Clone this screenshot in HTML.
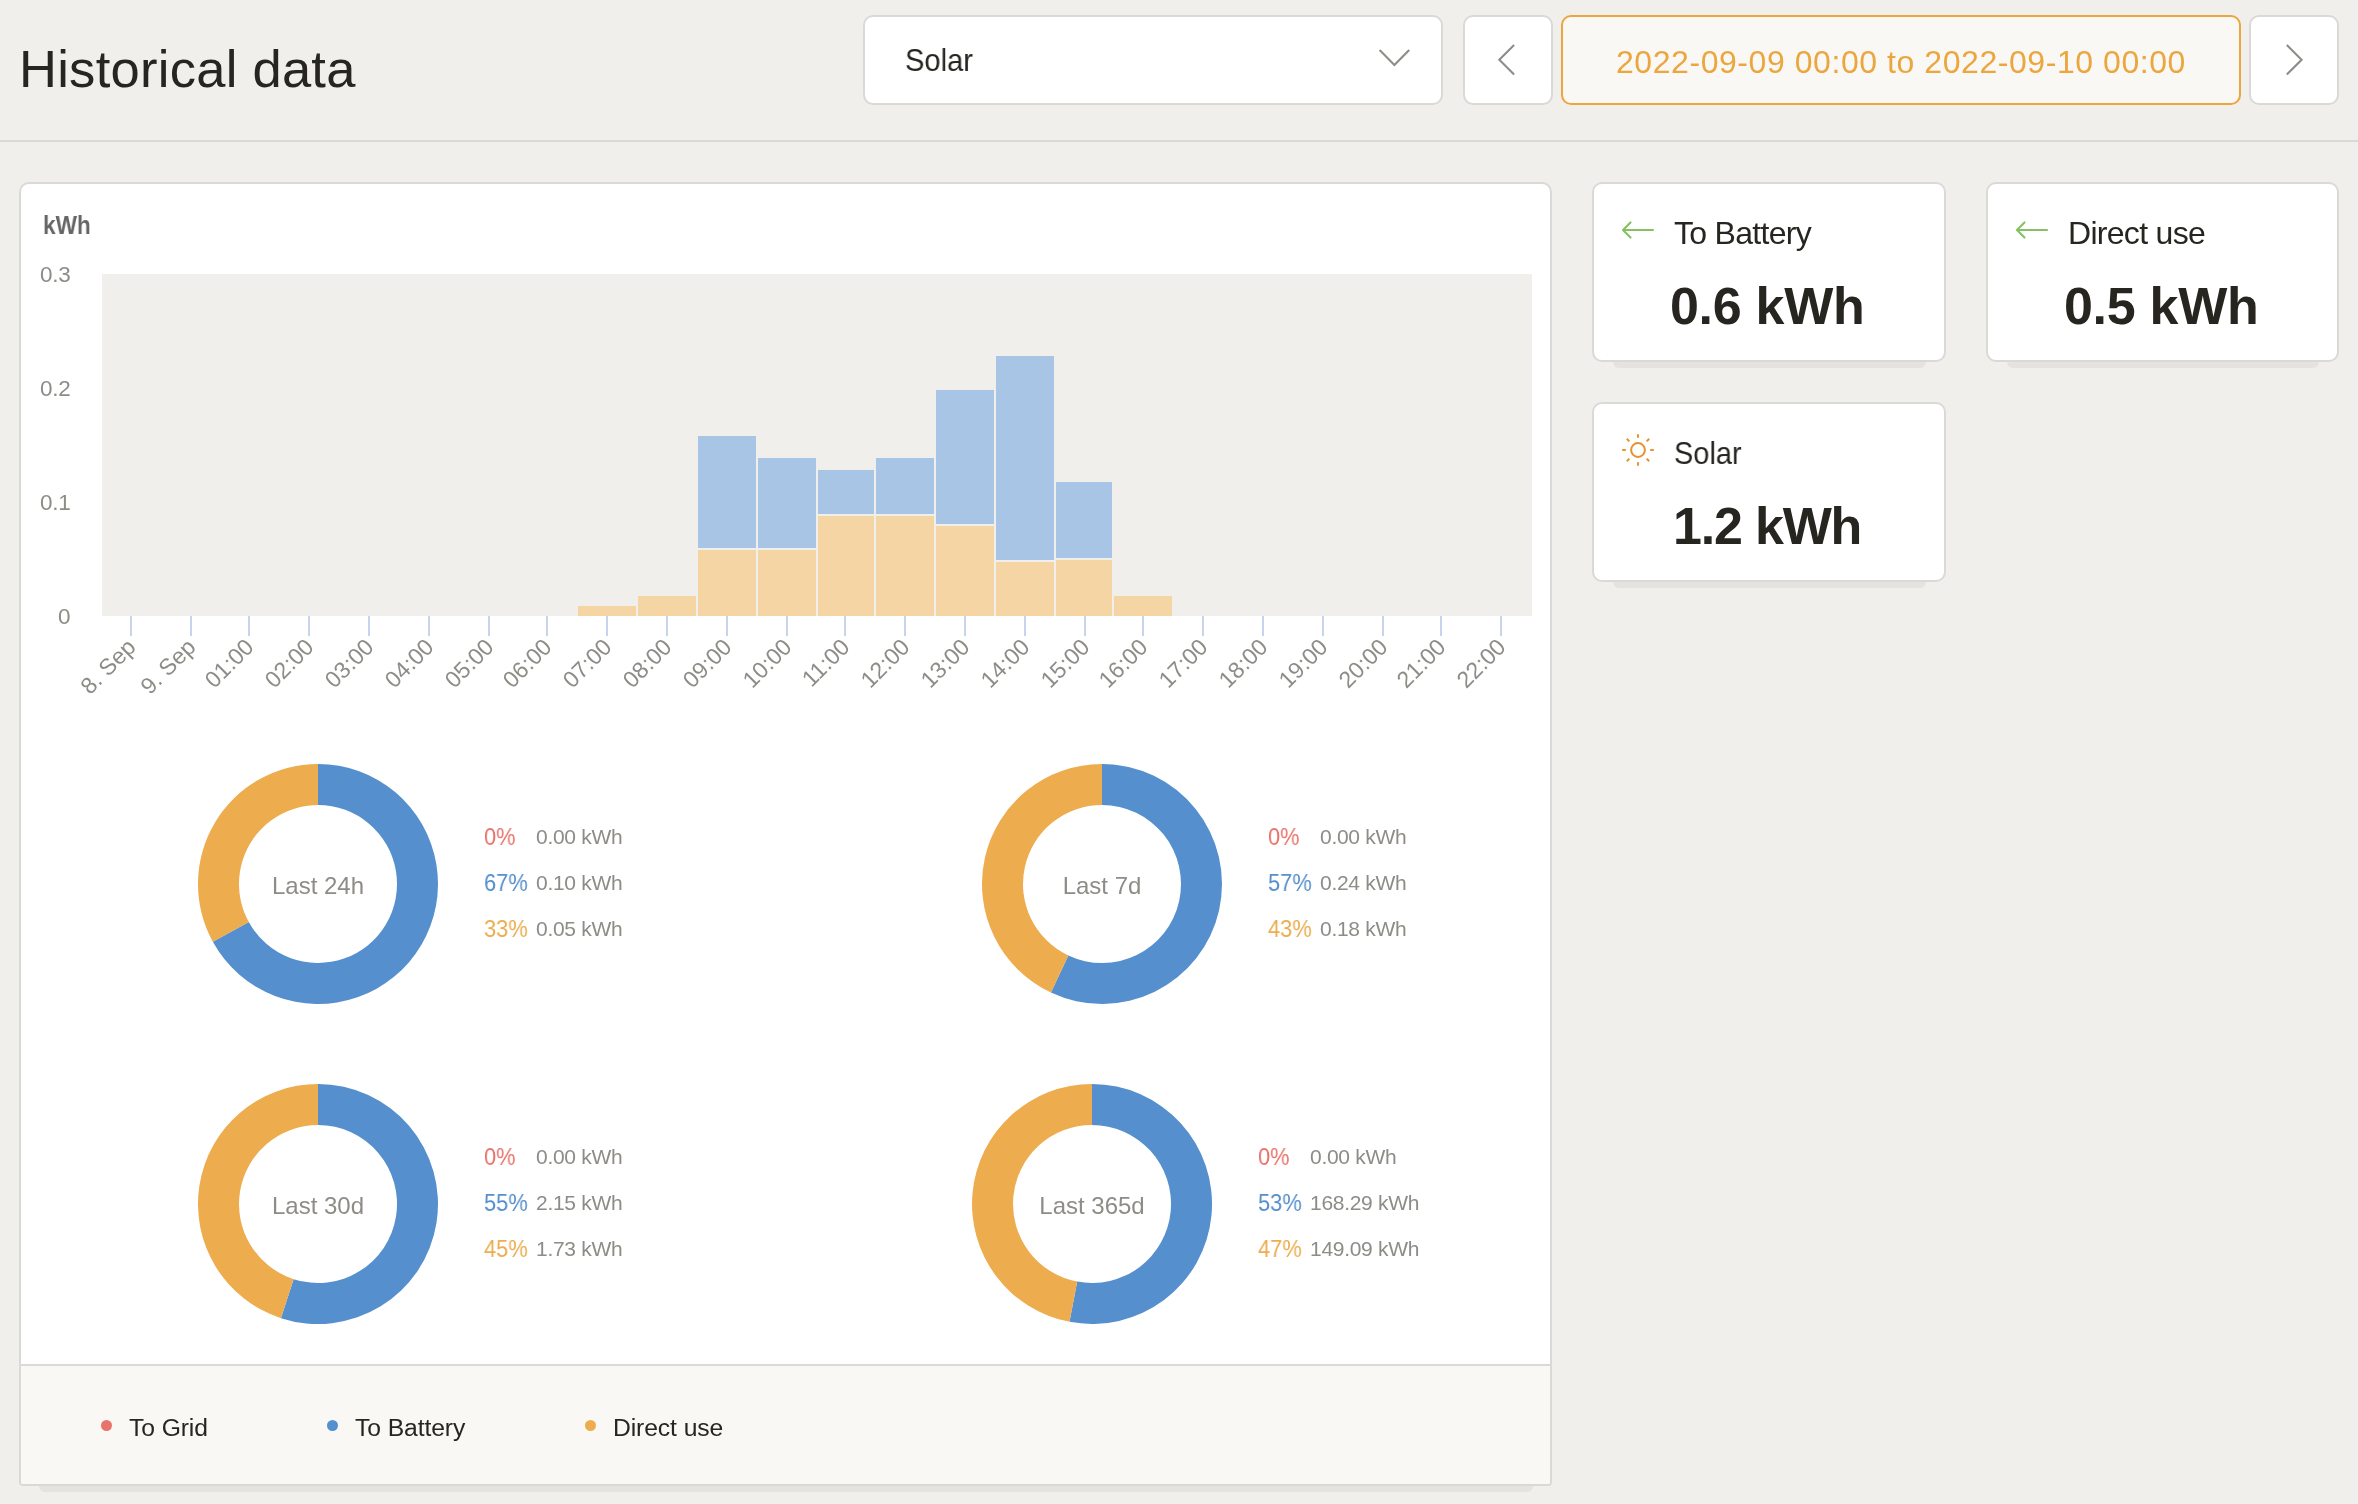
<!DOCTYPE html>
<html lang="en"><head><meta charset="utf-8"><title>Historical data</title>
<style>
html,body{margin:0;padding:0;}
body{width:2358px;height:1504px;overflow:hidden;background:#f0efeb;position:relative;font-family:"Liberation Sans",sans-serif;}
.t{position:absolute;white-space:pre;will-change:transform;}
.box{position:absolute;box-sizing:border-box;}
.header{position:absolute;left:0;top:0;width:2358px;height:140px;border-bottom:2px solid #dad9d6;box-sizing:content-box;}
.btn{position:absolute;box-sizing:border-box;background:#fff;border:2px solid #dad9d6;border-radius:10px;}
.card{position:absolute;box-sizing:border-box;background:#fff;border:2px solid #dad9d6;border-radius:10px;}
.shadow{position:absolute;background:#e4e3df;border-radius:0 0 10px 10px;}
svg{position:absolute;left:0;top:0;overflow:visible;will-change:transform;}
</style></head><body>

<div class="header"></div>
<div class="t " style="left:19.20px;top:42.55px;font-size:52.5px;line-height:52.5px;color:#272520;font-weight:400;letter-spacing:0.27px">Historical data</div>
<div class="btn" style="left:863px;top:15px;width:580px;height:90px"></div>
<div class="t " style="left:905.00px;transform:scaleX(0.91);transform-origin:0 0;top:43.91px;font-size:32px;line-height:32px;color:#272520;font-weight:400;letter-spacing:0px">Solar</div>
<div class="btn" style="left:1463px;top:15px;width:90px;height:90px;background:#fff"></div>
<div class="btn" style="left:1561px;top:15px;width:680px;height:90px;background:#f9f8f5;border-color:#eca63e"></div>
<div class="t " style="left:1616.00px;top:45.91px;font-size:32px;line-height:32px;color:#eca63e;font-weight:400;letter-spacing:0.56px">2022-09-09 00:00 to 2022-09-10 00:00</div>
<div class="btn" style="left:2249px;top:15px;width:90px;height:90px"></div>
<svg width="2358" height="140"><polyline points="1379.6,50.1 1394.4,65 1409.2,50.1" fill="none" stroke="#8e8d88" stroke-width="2.1"/><polyline points="1514.1,45 1499.3,59.8 1514.1,74.6" fill="none" stroke="#8e8d88" stroke-width="2.1"/><polyline points="2286.8,45 2301.6,59.8 2286.8,74.6" fill="none" stroke="#8e8d88" stroke-width="2.1"/></svg>
<div class="shadow" style="left:1613px;top:362px;width:313px;height:6px"></div>
<div class="card" style="left:1592px;top:182px;width:354px;height:180px"></div>
<div class="t " style="left:1674.00px;top:216.91px;font-size:32px;line-height:32px;color:#272520;font-weight:400;letter-spacing:-0.7px">To Battery</div>
<div class="t " style="left:1670.00px;top:279.97px;font-size:52px;line-height:52px;color:#272520;font-weight:700;letter-spacing:-0.3px">0.6 kWh</div>
<svg width="2358" height="1504"><g fill="none" stroke="#86c062" stroke-width="2.1" stroke-linecap="round" stroke-linejoin="round"><line x1="1623.5" y1="230" x2="1653" y2="230"/><polyline points="1630.5,222.4 1623,230 1630.5,237.6"/></g></svg>
<div class="shadow" style="left:2007px;top:362px;width:312px;height:6px"></div>
<div class="card" style="left:1986px;top:182px;width:353px;height:180px"></div>
<div class="t " style="left:2068.00px;top:216.91px;font-size:32px;line-height:32px;color:#272520;font-weight:400;letter-spacing:-0.7px">Direct use</div>
<div class="t " style="left:2064.00px;top:279.97px;font-size:52px;line-height:52px;color:#272520;font-weight:700;letter-spacing:-0.3px">0.5 kWh</div>
<svg width="2358" height="1504"><g fill="none" stroke="#86c062" stroke-width="2.1" stroke-linecap="round" stroke-linejoin="round"><line x1="2017.5" y1="230" x2="2047" y2="230"/><polyline points="2024.5,222.4 2017,230 2024.5,237.6"/></g></svg>
<div class="shadow" style="left:1613px;top:582px;width:313px;height:6px"></div>
<div class="card" style="left:1592px;top:402px;width:354px;height:180px"></div>
<div class="t " style="left:1674.00px;transform:scaleX(0.905);transform-origin:0 0;top:436.91px;font-size:32px;line-height:32px;color:#272520;font-weight:400;letter-spacing:0px">Solar</div>
<div class="t " style="left:1672.50px;top:499.97px;font-size:52px;line-height:52px;color:#272520;font-weight:700;letter-spacing:-1.2px">1.2 kWh</div>
<svg width="2358" height="1504"><g fill="none" stroke="#e8922c" stroke-width="2"><circle cx="1638" cy="450" r="6.9"/><line x1="1650.20" y1="450.00" x2="1653.80" y2="450.00"/><line x1="1646.63" y1="458.63" x2="1649.17" y2="461.17"/><line x1="1638.00" y1="462.20" x2="1638.00" y2="465.80"/><line x1="1629.37" y1="458.63" x2="1626.83" y2="461.17"/><line x1="1625.80" y1="450.00" x2="1622.20" y2="450.00"/><line x1="1629.37" y1="441.37" x2="1626.83" y2="438.83"/><line x1="1638.00" y1="437.80" x2="1638.00" y2="434.20"/><line x1="1646.63" y1="441.37" x2="1649.17" y2="438.83"/></g></svg>
<div class="shadow" style="left:39px;top:1486px;width:1494px;height:6px"></div>
<div class="card" style="left:19px;top:182px;width:1533px;height:1304px;overflow:hidden;border-radius:10px 10px 4px 4px"><div style="position:absolute;left:0;right:0;bottom:0;height:118px;background:#f9f8f5;border-top:2px solid #dad9d6"></div></div>
<div class="t " style="left:43.00px;transform:scaleX(0.87);transform-origin:0 0;top:211.99px;font-size:26px;line-height:26px;color:#666666;font-weight:700;letter-spacing:0px">kWh</div>
<div class="t " style="right:2287.80px;top:263.65px;font-size:22.5px;line-height:22.5px;color:#8e8c87;font-weight:400;letter-spacing:-0.3px">0.3</div>
<div class="t " style="right:2287.80px;top:377.65px;font-size:22.5px;line-height:22.5px;color:#8e8c87;font-weight:400;letter-spacing:-0.3px">0.2</div>
<div class="t " style="right:2287.80px;top:491.65px;font-size:22.5px;line-height:22.5px;color:#8e8c87;font-weight:400;letter-spacing:-0.3px">0.1</div>
<div class="t " style="right:2287.80px;top:605.65px;font-size:22.5px;line-height:22.5px;color:#8e8c87;font-weight:400;letter-spacing:-0.3px">0</div>
<svg width="2358" height="1504"><rect x="102" y="274" width="1430" height="342" fill="#f0efeb"/><rect x="130" y="616" width="2" height="20" fill="#c7d4ee"/><rect x="190" y="616" width="2" height="20" fill="#c7d4ee"/><rect x="248" y="616" width="2" height="20" fill="#c7d4ee"/><rect x="308" y="616" width="2" height="20" fill="#c7d4ee"/><rect x="368" y="616" width="2" height="20" fill="#c7d4ee"/><rect x="428" y="616" width="2" height="20" fill="#c7d4ee"/><rect x="488" y="616" width="2" height="20" fill="#c7d4ee"/><rect x="546" y="616" width="2" height="20" fill="#c7d4ee"/><rect x="606" y="616" width="2" height="20" fill="#c7d4ee"/><rect x="666" y="616" width="2" height="20" fill="#c7d4ee"/><rect x="726" y="616" width="2" height="20" fill="#c7d4ee"/><rect x="786" y="616" width="2" height="20" fill="#c7d4ee"/><rect x="844" y="616" width="2" height="20" fill="#c7d4ee"/><rect x="904" y="616" width="2" height="20" fill="#c7d4ee"/><rect x="964" y="616" width="2" height="20" fill="#c7d4ee"/><rect x="1024" y="616" width="2" height="20" fill="#c7d4ee"/><rect x="1084" y="616" width="2" height="20" fill="#c7d4ee"/><rect x="1142" y="616" width="2" height="20" fill="#c7d4ee"/><rect x="1202" y="616" width="2" height="20" fill="#c7d4ee"/><rect x="1262" y="616" width="2" height="20" fill="#c7d4ee"/><rect x="1322" y="616" width="2" height="20" fill="#c7d4ee"/><rect x="1382" y="616" width="2" height="20" fill="#c7d4ee"/><rect x="1440" y="616" width="2" height="20" fill="#c7d4ee"/><rect x="1500" y="616" width="2" height="20" fill="#c7d4ee"/><rect x="578" y="606" width="58" height="10" fill="#f5d5a3"/><rect x="638" y="596" width="58" height="20" fill="#f5d5a3"/><rect x="698" y="550" width="58" height="66" fill="#f5d5a3"/><rect x="698" y="436" width="58" height="112" fill="#a9c5e5"/><rect x="758" y="550" width="58" height="66" fill="#f5d5a3"/><rect x="758" y="458" width="58" height="90" fill="#a9c5e5"/><rect x="818" y="516" width="56" height="100" fill="#f5d5a3"/><rect x="818" y="470" width="56" height="44" fill="#a9c5e5"/><rect x="876" y="516" width="58" height="100" fill="#f5d5a3"/><rect x="876" y="458" width="58" height="56" fill="#a9c5e5"/><rect x="936" y="526" width="58" height="90" fill="#f5d5a3"/><rect x="936" y="390" width="58" height="134" fill="#a9c5e5"/><rect x="996" y="562" width="58" height="54" fill="#f5d5a3"/><rect x="996" y="356" width="58" height="204" fill="#a9c5e5"/><rect x="1056" y="560" width="56" height="56" fill="#f5d5a3"/><rect x="1056" y="482" width="56" height="76" fill="#a9c5e5"/><rect x="1114" y="596" width="58" height="20" fill="#f5d5a3"/><text x="137" y="648.5" transform="rotate(-45 137 648.5)" text-anchor="end" font-family="Liberation Sans" font-size="23" fill="#8e8c87">8. Sep</text><text x="197" y="648.5" transform="rotate(-45 197 648.5)" text-anchor="end" font-family="Liberation Sans" font-size="23" fill="#8e8c87">9. Sep</text><text x="255" y="648.5" transform="rotate(-45 255 648.5)" text-anchor="end" font-family="Liberation Sans" font-size="23" fill="#8e8c87">01:00</text><text x="315" y="648.5" transform="rotate(-45 315 648.5)" text-anchor="end" font-family="Liberation Sans" font-size="23" fill="#8e8c87">02:00</text><text x="375" y="648.5" transform="rotate(-45 375 648.5)" text-anchor="end" font-family="Liberation Sans" font-size="23" fill="#8e8c87">03:00</text><text x="435" y="648.5" transform="rotate(-45 435 648.5)" text-anchor="end" font-family="Liberation Sans" font-size="23" fill="#8e8c87">04:00</text><text x="495" y="648.5" transform="rotate(-45 495 648.5)" text-anchor="end" font-family="Liberation Sans" font-size="23" fill="#8e8c87">05:00</text><text x="553" y="648.5" transform="rotate(-45 553 648.5)" text-anchor="end" font-family="Liberation Sans" font-size="23" fill="#8e8c87">06:00</text><text x="613" y="648.5" transform="rotate(-45 613 648.5)" text-anchor="end" font-family="Liberation Sans" font-size="23" fill="#8e8c87">07:00</text><text x="673" y="648.5" transform="rotate(-45 673 648.5)" text-anchor="end" font-family="Liberation Sans" font-size="23" fill="#8e8c87">08:00</text><text x="733" y="648.5" transform="rotate(-45 733 648.5)" text-anchor="end" font-family="Liberation Sans" font-size="23" fill="#8e8c87">09:00</text><text x="793" y="648.5" transform="rotate(-45 793 648.5)" text-anchor="end" font-family="Liberation Sans" font-size="23" fill="#8e8c87">10:00</text><text x="851" y="648.5" transform="rotate(-45 851 648.5)" text-anchor="end" font-family="Liberation Sans" font-size="23" fill="#8e8c87">11:00</text><text x="911" y="648.5" transform="rotate(-45 911 648.5)" text-anchor="end" font-family="Liberation Sans" font-size="23" fill="#8e8c87">12:00</text><text x="971" y="648.5" transform="rotate(-45 971 648.5)" text-anchor="end" font-family="Liberation Sans" font-size="23" fill="#8e8c87">13:00</text><text x="1031" y="648.5" transform="rotate(-45 1031 648.5)" text-anchor="end" font-family="Liberation Sans" font-size="23" fill="#8e8c87">14:00</text><text x="1091" y="648.5" transform="rotate(-45 1091 648.5)" text-anchor="end" font-family="Liberation Sans" font-size="23" fill="#8e8c87">15:00</text><text x="1149" y="648.5" transform="rotate(-45 1149 648.5)" text-anchor="end" font-family="Liberation Sans" font-size="23" fill="#8e8c87">16:00</text><text x="1209" y="648.5" transform="rotate(-45 1209 648.5)" text-anchor="end" font-family="Liberation Sans" font-size="23" fill="#8e8c87">17:00</text><text x="1269" y="648.5" transform="rotate(-45 1269 648.5)" text-anchor="end" font-family="Liberation Sans" font-size="23" fill="#8e8c87">18:00</text><text x="1329" y="648.5" transform="rotate(-45 1329 648.5)" text-anchor="end" font-family="Liberation Sans" font-size="23" fill="#8e8c87">19:00</text><text x="1389" y="648.5" transform="rotate(-45 1389 648.5)" text-anchor="end" font-family="Liberation Sans" font-size="23" fill="#8e8c87">20:00</text><text x="1447" y="648.5" transform="rotate(-45 1447 648.5)" text-anchor="end" font-family="Liberation Sans" font-size="23" fill="#8e8c87">21:00</text><text x="1507" y="648.5" transform="rotate(-45 1507 648.5)" text-anchor="end" font-family="Liberation Sans" font-size="23" fill="#8e8c87">22:00</text><path d="M318,764 A120,120 0 1 1 212.84,941.81 L248.77,922.06 A79,79 0 1 0 318,805 Z" fill="#558fcd"/><path d="M212.84,941.81 A120,120 0 0 1 318,764 L318,805 A79,79 0 0 0 248.77,922.06 Z" fill="#edac4d"/><path d="M1102,764 A120,120 0 1 1 1050.91,992.58 L1068.36,955.48 A79,79 0 1 0 1102,805 Z" fill="#558fcd"/><path d="M1050.91,992.58 A120,120 0 0 1 1102,764 L1102,805 A79,79 0 0 0 1068.36,955.48 Z" fill="#edac4d"/><path d="M318,1084 A120,120 0 1 1 280.92,1318.13 L293.59,1279.13 A79,79 0 1 0 318,1125 Z" fill="#558fcd"/><path d="M280.92,1318.13 A120,120 0 0 1 318,1084 L318,1125 A79,79 0 0 0 293.59,1279.13 Z" fill="#edac4d"/><path d="M1092,1084 A120,120 0 1 1 1069.51,1321.87 L1077.20,1281.60 A79,79 0 1 0 1092,1125 Z" fill="#558fcd"/><path d="M1069.51,1321.87 A120,120 0 0 1 1092,1084 L1092,1125 A79,79 0 0 0 1077.20,1281.60 Z" fill="#edac4d"/></svg>
<div class="t " style="left:318.00px;transform:translateX(-50%);top:874.28px;font-size:24px;line-height:24px;color:#8e8c87;font-weight:400;letter-spacing:0px">Last 24h</div>
<div class="t " style="left:484.00px;transform:scaleX(0.91);transform-origin:0 0;top:824.68px;font-size:24px;line-height:24px;color:#e8736c;font-weight:400;letter-spacing:0px">0%</div>
<div class="t " style="left:535.50px;top:826.22px;font-size:21px;line-height:21px;color:#8e8c87;font-weight:400;letter-spacing:-0.3px">0.00 kWh</div>
<div class="t " style="left:484.00px;transform:scaleX(0.91);transform-origin:0 0;top:870.68px;font-size:24px;line-height:24px;color:#558fcd;font-weight:400;letter-spacing:0px">67%</div>
<div class="t " style="left:535.50px;top:872.22px;font-size:21px;line-height:21px;color:#8e8c87;font-weight:400;letter-spacing:-0.3px">0.10 kWh</div>
<div class="t " style="left:484.00px;transform:scaleX(0.91);transform-origin:0 0;top:916.68px;font-size:24px;line-height:24px;color:#edac4d;font-weight:400;letter-spacing:0px">33%</div>
<div class="t " style="left:535.50px;top:918.22px;font-size:21px;line-height:21px;color:#8e8c87;font-weight:400;letter-spacing:-0.3px">0.05 kWh</div>
<div class="t " style="left:1102.00px;transform:translateX(-50%);top:874.28px;font-size:24px;line-height:24px;color:#8e8c87;font-weight:400;letter-spacing:0px">Last 7d</div>
<div class="t " style="left:1268.00px;transform:scaleX(0.91);transform-origin:0 0;top:824.68px;font-size:24px;line-height:24px;color:#e8736c;font-weight:400;letter-spacing:0px">0%</div>
<div class="t " style="left:1319.50px;top:826.22px;font-size:21px;line-height:21px;color:#8e8c87;font-weight:400;letter-spacing:-0.3px">0.00 kWh</div>
<div class="t " style="left:1268.00px;transform:scaleX(0.91);transform-origin:0 0;top:870.68px;font-size:24px;line-height:24px;color:#558fcd;font-weight:400;letter-spacing:0px">57%</div>
<div class="t " style="left:1319.50px;top:872.22px;font-size:21px;line-height:21px;color:#8e8c87;font-weight:400;letter-spacing:-0.3px">0.24 kWh</div>
<div class="t " style="left:1268.00px;transform:scaleX(0.91);transform-origin:0 0;top:916.68px;font-size:24px;line-height:24px;color:#edac4d;font-weight:400;letter-spacing:0px">43%</div>
<div class="t " style="left:1319.50px;top:918.22px;font-size:21px;line-height:21px;color:#8e8c87;font-weight:400;letter-spacing:-0.3px">0.18 kWh</div>
<div class="t " style="left:318.00px;transform:translateX(-50%);top:1194.28px;font-size:24px;line-height:24px;color:#8e8c87;font-weight:400;letter-spacing:0px">Last 30d</div>
<div class="t " style="left:484.00px;transform:scaleX(0.91);transform-origin:0 0;top:1144.68px;font-size:24px;line-height:24px;color:#e8736c;font-weight:400;letter-spacing:0px">0%</div>
<div class="t " style="left:535.50px;top:1146.22px;font-size:21px;line-height:21px;color:#8e8c87;font-weight:400;letter-spacing:-0.3px">0.00 kWh</div>
<div class="t " style="left:484.00px;transform:scaleX(0.91);transform-origin:0 0;top:1190.68px;font-size:24px;line-height:24px;color:#558fcd;font-weight:400;letter-spacing:0px">55%</div>
<div class="t " style="left:535.50px;top:1192.22px;font-size:21px;line-height:21px;color:#8e8c87;font-weight:400;letter-spacing:-0.3px">2.15 kWh</div>
<div class="t " style="left:484.00px;transform:scaleX(0.91);transform-origin:0 0;top:1236.68px;font-size:24px;line-height:24px;color:#edac4d;font-weight:400;letter-spacing:0px">45%</div>
<div class="t " style="left:535.50px;top:1238.22px;font-size:21px;line-height:21px;color:#8e8c87;font-weight:400;letter-spacing:-0.3px">1.73 kWh</div>
<div class="t " style="left:1092.00px;transform:translateX(-50%);top:1194.28px;font-size:24px;line-height:24px;color:#8e8c87;font-weight:400;letter-spacing:0px">Last 365d</div>
<div class="t " style="left:1258.00px;transform:scaleX(0.91);transform-origin:0 0;top:1144.68px;font-size:24px;line-height:24px;color:#e8736c;font-weight:400;letter-spacing:0px">0%</div>
<div class="t " style="left:1309.50px;top:1146.22px;font-size:21px;line-height:21px;color:#8e8c87;font-weight:400;letter-spacing:-0.3px">0.00 kWh</div>
<div class="t " style="left:1258.00px;transform:scaleX(0.91);transform-origin:0 0;top:1190.68px;font-size:24px;line-height:24px;color:#558fcd;font-weight:400;letter-spacing:0px">53%</div>
<div class="t " style="left:1309.50px;top:1192.22px;font-size:21px;line-height:21px;color:#8e8c87;font-weight:400;letter-spacing:-0.3px">168.29 kWh</div>
<div class="t " style="left:1258.00px;transform:scaleX(0.91);transform-origin:0 0;top:1236.68px;font-size:24px;line-height:24px;color:#edac4d;font-weight:400;letter-spacing:0px">47%</div>
<div class="t " style="left:1309.50px;top:1238.22px;font-size:21px;line-height:21px;color:#8e8c87;font-weight:400;letter-spacing:-0.3px">149.09 kWh</div>
<div style="position:absolute;left:100.8px;top:1419.8px;width:11px;height:11px;border-radius:50%;background:#e8736c"></div>
<div class="t " style="left:128.80px;top:1416.09px;font-size:24.7px;line-height:24.7px;color:#272520;font-weight:400;letter-spacing:-0.1px">To Grid</div>
<div style="position:absolute;left:326.8px;top:1419.8px;width:11px;height:11px;border-radius:50%;background:#558fcd"></div>
<div class="t " style="left:354.80px;top:1416.09px;font-size:24.7px;line-height:24.7px;color:#272520;font-weight:400;letter-spacing:-0.1px">To Battery</div>
<div style="position:absolute;left:584.8px;top:1419.8px;width:11px;height:11px;border-radius:50%;background:#edac4d"></div>
<div class="t " style="left:612.80px;top:1416.09px;font-size:24.7px;line-height:24.7px;color:#272520;font-weight:400;letter-spacing:-0.1px">Direct use</div>
</body></html>
